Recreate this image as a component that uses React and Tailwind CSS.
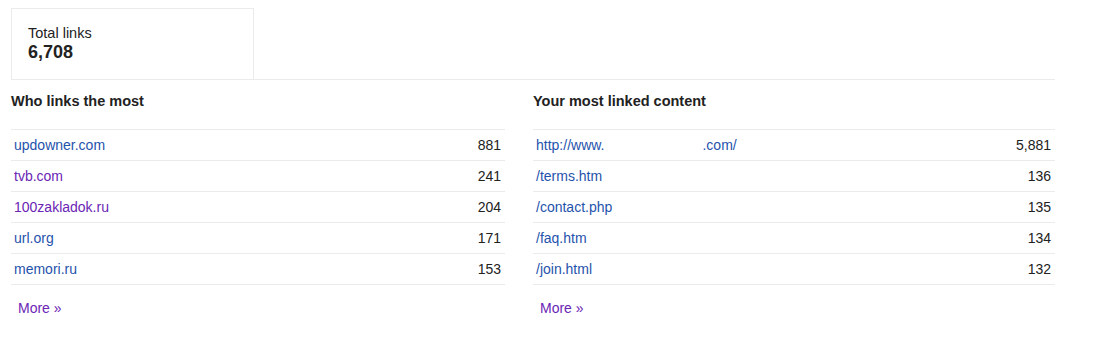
import React from "react";

const blue = "text-[#1f53ac]";
const purple = "text-[#6b25b5]";

const left = [
  { t: "updowner.com", n: "881", v: false },
  { t: "tvb.com", n: "241", v: true },
  { t: "100zakladok.ru", n: "204", v: true },
  { t: "url.org", n: "171", v: false },
  { t: "memori.ru", n: "153", v: false },
];

const right = [
  { t: "http://www.", t2: ".com/", n: "5,881" },
  { t: "/terms.htm", n: "136" },
  { t: "/contact.php", n: "135" },
  { t: "/faq.htm", n: "134" },
  { t: "/join.html", n: "132" },
];

function Table({ rows }) {
  return (
    <div className="mt-[19px] border-b border-[#ebebeb]">
      {rows.map((r, i) => (
        <div
          key={i}
          className="flex h-[31px] items-center justify-between border-t border-[#ebebeb] pl-[3px] pr-[4px]"
        >
          <a className={`${r.v ? purple : blue} flex`}>
            <span>{r.t}</span>
            {r.t2 && <span className="ml-[98px]">{r.t2}</span>}
          </a>
          <span className="text-[#222]">{r.n}</span>
        </div>
      ))}
    </div>
  );
}

export default function App() {
  return (
    <div
      className="w-[1097px] h-[355px] bg-white pl-[11px] pt-[8px] text-[14px] text-[#222]"
      style={{ fontFamily: '"Liberation Sans", Arial, sans-serif' }}
    >
      <div className="w-[1044px]">
        <div className="border-b border-[#ebebeb]">
          <div className="w-[243px] h-[71px] border-l border-t border-r border-[#ebebeb] pl-[16px] pt-[16px]">
            <div className="text-[14.5px] leading-[17px]">Total links</div>
            <div className="text-[18px] font-bold leading-[20px]">6,708</div>
          </div>
        </div>
        <div className="flex">
          <div className="w-[522px] pr-[28px]">
            <div className="mt-[13px] text-[14.5px] font-bold leading-[17px]">Who links the most</div>
            <Table rows={left} />
            <a className={`${purple} mt-[13px] ml-[7px] block`}>More »</a>
          </div>
          <div className="w-[522px]">
            <div className="mt-[13px] text-[14.5px] font-bold leading-[17px]">Your most linked content</div>
            <Table rows={right} />
            <a className={`${purple} mt-[13px] ml-[7px] block`}>More »</a>
          </div>
        </div>
      </div>
    </div>
  );
}
